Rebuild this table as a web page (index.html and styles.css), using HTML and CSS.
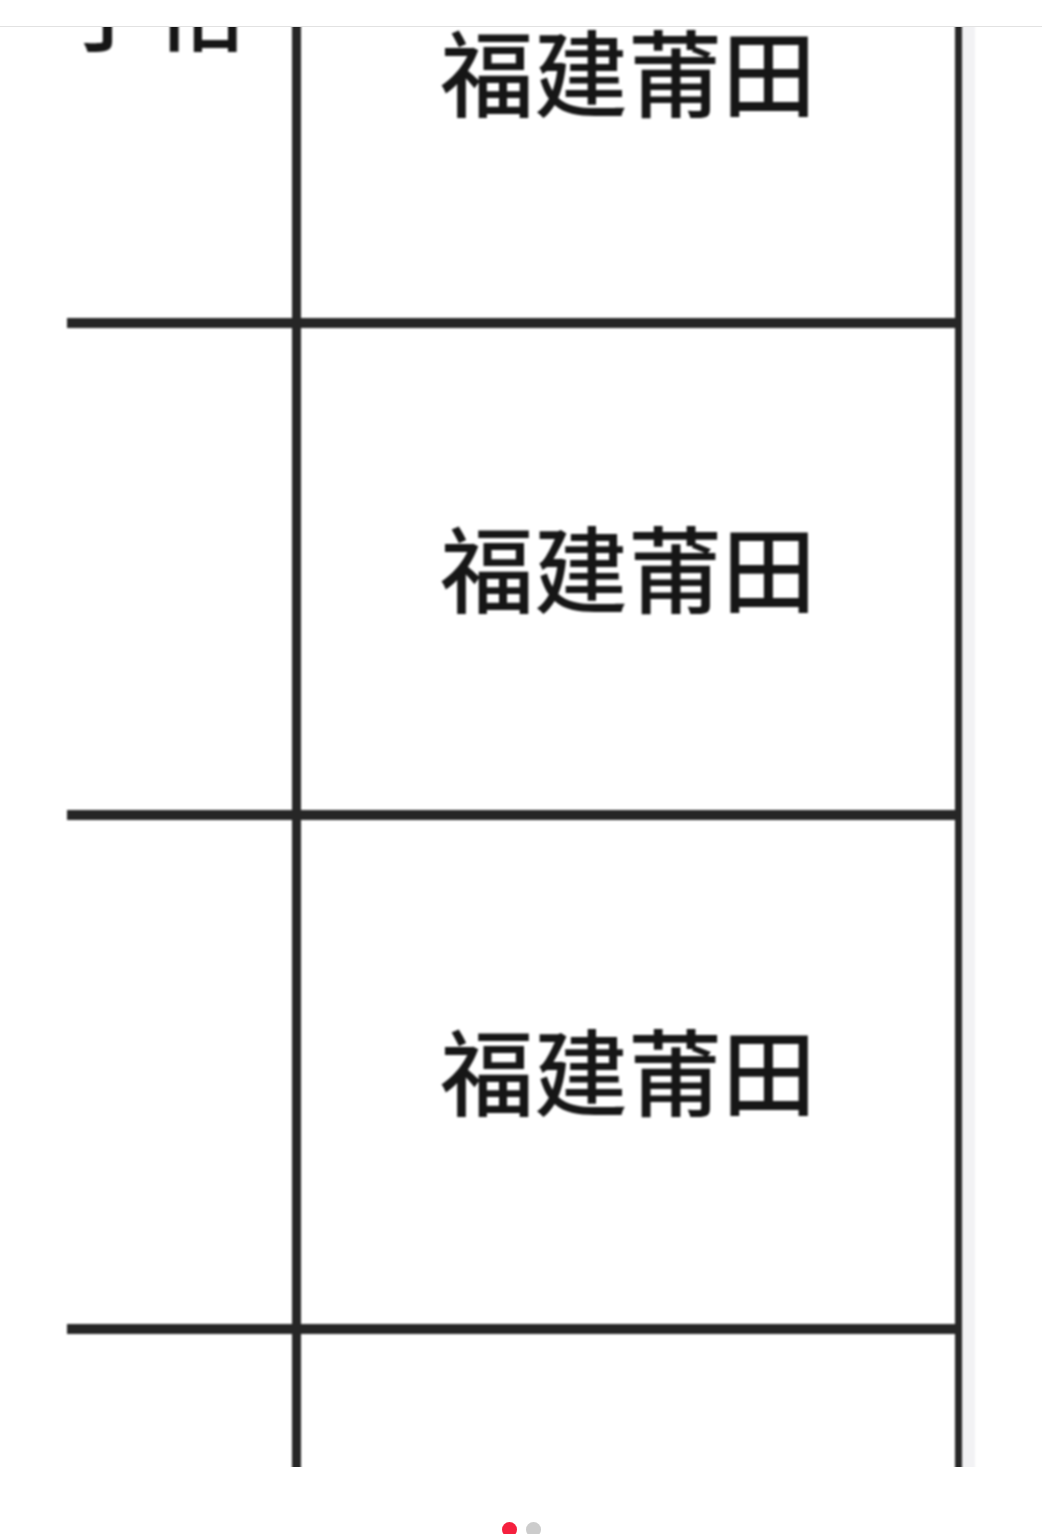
FILE: index.html
```html
<!DOCTYPE html>
<html lang="zh-CN">
<head>
<meta charset="utf-8">
<title>图片</title>
<link rel="stylesheet" href="styles.css">
</head>
<body>
<div class="topbar"></div>
<div class="viewer">
  <div class="photo">
    <div class="grid">
      <div class="cell cell-left row1"><span class="name">李子怡</span></div>
      <div class="cell cell-right row1">福建莆田</div>
      <div class="cell cell-left row2"></div>
      <div class="cell cell-right row2">福建莆田</div>
      <div class="cell cell-left row3"></div>
      <div class="cell cell-right row3">福建莆田</div>
      <div class="cell cell-left row4"></div>
      <div class="cell cell-right row4"></div>
    </div>
  </div>
</div>
<div class="dots">
  <span class="dot active"></span>
  <span class="dot"></span>
</div>
</body>
</html>
```

FILE: styles.css
```css
html, body {
  margin: 0;
  padding: 0;
  background: #ffffff;
}

body {
  width: 1042px;
  height: 1534px;
  overflow: hidden;
  font-family: "Noto Sans CJK SC", "Noto Sans", sans-serif;
}

.topbar {
  height: 26px;
  border-bottom: 1px solid #e2e2e2;
  background: #ffffff;
}

.viewer {
  height: 1440px;
  overflow: hidden;
  padding-left: 67px;
  background: #ffffff;
}

.photo {
  width: 895px;
  margin-top: -199px;
  border-right: 13px solid #f2f2f4;
  filter: blur(1px);
}

.grid {
  display: grid;
  grid-template-columns: 225px 654px;
  grid-template-rows: 490px 482px 504px 200px;
  column-gap: 9px;
  row-gap: 10px;
  background: #262626;
  padding-right: 7px;
}

.cell {
  background: #ffffff;
  color: #161616;
  font-size: 94px;
  line-height: 94px;
  font-weight: 500;
  overflow: hidden;
}

.cell-right {
  display: flex;
  align-items: center;
  justify-content: center;
  padding-bottom: 8px;
  box-sizing: border-box;
}

.cell-left.row1 {
  display: flex;
  justify-content: flex-end;
  align-items: flex-start;
  padding-top: 128px;
  padding-right: 44px;
  box-sizing: border-box;
}

.name {
  white-space: nowrap;
}

.dots {
  display: flex;
  justify-content: center;
  gap: 9px;
  padding-top: 55px;
}

.dot {
  width: 15px;
  height: 15px;
  border-radius: 50%;
  background: #cccccc;
}

.dot.active {
  background: #f5203e;
}
```
